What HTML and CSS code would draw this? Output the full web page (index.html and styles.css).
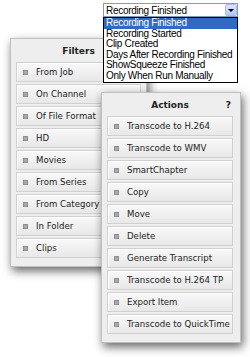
FILE: index.html
```html
<!DOCTYPE html>
<html lang="en">
<head>
  <meta charset="UTF-8">
  <title>Workflow rules</title>
  <link rel="stylesheet" href="styles.css">
</head>
<body>

<div class="canvas">

  <div class="panel filters">
    <div class="panel-title">Filters</div>
    <ul class="items">
      <li><span class="grip"></span>From Job</li>
      <li><span class="grip"></span>On Channel</li>
      <li><span class="grip"></span>Of File Format</li>
      <li><span class="grip"></span>HD</li>
      <li><span class="grip"></span>Movies</li>
      <li><span class="grip"></span>From Series</li>
      <li><span class="grip"></span>From Category</li>
      <li><span class="grip"></span>In Folder</li>
      <li><span class="grip"></span>Clips</li>
    </ul>
  </div>

  <div class="panel actions">
    <div class="panel-title">Actions <span class="help">?</span></div>
    <ul class="items">
      <li><span class="grip"></span>Transcode to H.264</li>
      <li><span class="grip"></span>Transcode to WMV</li>
      <li><span class="grip"></span>SmartChapter</li>
      <li><span class="grip"></span>Copy</li>
      <li><span class="grip"></span>Move</li>
      <li><span class="grip"></span>Delete</li>
      <li><span class="grip"></span>Generate Transcript</li>
      <li><span class="grip"></span>Transcode to H.264 TP</li>
      <li><span class="grip"></span>Export Item</li>
      <li><span class="grip"></span>Transcode to QuickTime</li>
    </ul>
  </div>

  <!-- открытый выпадающий список -->
  <div class="combo">
    <div class="combo-box">
      <span class="combo-value">Recording Finished</span>
      <span class="combo-arrow"></span>
    </div>
    <ul class="combo-list">
      <li class="selected">Recording Finished</li>
      <li>Recording Started</li>
      <li>Clip Created</li>
      <li>Days After Recording Finished</li>
      <li>ShowSqueeze Finished</li>
      <li>Only When Run Manually</li>
    </ul>
  </div>

</div>

</body>
</html>
```

FILE: styles.css
```css
* {
  box-sizing: border-box;
}

body {
  margin: 0;
  padding: 0;
  background-color: #ffffff;
  font-family: 'DejaVu Sans', Verdana, sans-serif;
}

.canvas {
  position: relative;
  width: 250px;
  height: 357px;
  overflow: hidden;
}

ul {
  list-style: none;
  margin: 0;
  padding: 0;
}

/* Панели */
.panel {
  position: absolute;
  background-color: #eeeeee;
  border: 1px solid #c0c0c0;
  box-shadow: 2px 4px 9px rgba(0,0,0,0.6);
}

.filters {
  left: 10px;
  top: 38px;
  width: 137px;
  height: 229px;
  padding: 0 5px 0 5px;
}

.actions {
  left: 101px;
  top: 92px;
  width: 140px;
  height: 251px;
  padding: 0 7px 0 5px;
}

.panel-title {
  position: relative;
  height: 23px;
  line-height: 24px;
  text-align: center;
  font-size: 9px;
  font-weight: bold;
  color: #222;
}

.help {
  position: absolute;
  right: 2px;
  top: 0;
  font-size: 9px;
}

.items {
  display: flex;
  flex-direction: column;
  gap: 2px;
}

.items li {
  display: flex;
  align-items: center;
  height: 20px;
  padding-left: 6px;
  border: 1px solid #d0d0d0;
  background: linear-gradient(#f8f8f8, #e8e8e8);
  box-shadow: inset 1px 1px 0 #ffffff;
  font-size: 8.6px;
  color: #222;
  white-space: nowrap;
}

.grip {
  width: 5px;
  height: 5px;
  margin-right: 8px;
  background-color: #a8a8a8;
  border: 1px solid #8f8f8f;
}

/* Выпадающий список */
.combo {
  position: absolute;
  left: 103px;
  top: 3px;
  width: 135px;
  font-family: 'Liberation Sans', Arial, sans-serif;
  font-size: 10px;
  letter-spacing: -0.3px;
  color: #000;
}

.combo-box {
  display: flex;
  align-items: center;
  height: 14px;
  border: 1px solid #7f9db9;
  background-color: #fff;
  padding-left: 2px;
}

.combo-value {
  flex: 1;
}

.combo-arrow {
  position: relative;
  width: 12px;
  height: 12px;
  background: linear-gradient(#dce7fd, #b4c8f6);
  border: 1px solid #a7bff0;
  border-radius: 2px;
}

.combo-arrow::after {
  content: '';
  position: absolute;
  left: 2px;
  top: 4px;
  border-left: 3px solid transparent;
  border-right: 3px solid transparent;
  border-top: 3px solid #000;
}

.combo-list {
  border: 1px solid #000;
  background-color: #fff;
}

.combo-list li {
  height: 10.6px;
  line-height: 10.6px;
  padding-left: 2px;
}

.combo-list li.selected {
  background-color: #316ac5;
  color: #fff;
}
```
